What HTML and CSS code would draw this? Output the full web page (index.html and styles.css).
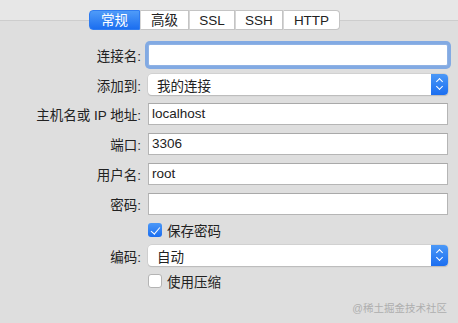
FILE: index.html
```html
<!DOCTYPE html>
<html lang="zh-CN">

<head>
    <meta charset="UTF-8">
    <title>新建连接</title>
    <link rel="stylesheet" href="styles.css">
</head>

<body>
    <!-- 탭 -->
    <div class="tabs">
        <span class="tab tab1 on">常规</span>
        <span class="tab tab2">高级</span>
        <span class="tab tab3">SSL</span>
        <span class="tab tab4">SSH</span>
        <span class="tab tab5">HTTP</span>
    </div>

    <!-- 폼 -->
    <div class="form">
        <label class="lb">连接名:</label>
        <div class="field focus"></div>

        <label class="lb">添加到:</label>
        <div class="sel"><span class="seltxt">我的连接</span><span class="step"></span></div>

        <label class="lb">主机名或 IP 地址:</label>
        <div class="field">localhost</div>

        <label class="lb">端口:</label>
        <div class="field">3306</div>

        <label class="lb">用户名:</label>
        <div class="field">root</div>

        <label class="lb">密码:</label>
        <div class="field"></div>

        <span></span>
        <div class="chk"><span class="box on"></span>保存密码</div>

        <label class="lb">编码:</label>
        <div class="sel"><span class="seltxt">自动</span><span class="step"></span></div>

        <span></span>
        <div class="chk"><span class="box"></span>使用压缩</div>
    </div>

    <div class="mark">@稀土掘金技术社区</div>
</body>

</html>
```

FILE: styles.css
```css
/* 공통 */
body {
    margin: 0;
    height: 323px;
    position: relative;
    font-family: "Liberation Sans", "Noto Sans CJK SC", sans-serif;
    font-size: 13.5px;
    color: #222;
    /* 위쪽 밝은 띠 + 가로선 + 본문 배경 */
    background: linear-gradient(#e7e7e7 0 20px, #cdcdcd 20px 21px, #dedede 21px);
}

/* 탭 버튼 묶음 */
.tabs {
    display: flex;
    margin-left: 89px;
    padding-top: 10px;
}

.tab {
    height: 20px;
    line-height: 19px;
    text-align: center;
    background: #fff;
    border: 1px solid #c4c4c4;
    border-left: 1px solid #d6d6d6;
    box-sizing: border-box;
    font-size: 13.5px;
}

.tab1 {
    width: 51px;
    border-radius: 4px 0 0 4px;
    border-left-color: #c4c4c4;
}

.tab2 { width: 49px; }
.tab3 { width: 46px; }
.tab4 { width: 48px; }

.tab5 {
    width: 57px;
    border-radius: 0 4px 4px 0;
}

.tab.on {
    color: #fff;
    background: linear-gradient(#4f9bf8, #1b6ef0);
    border-color: #2f7cf0;
}

/* 폼 그리드 */
.form {
    display: grid;
    grid-template-columns: 141px 300px;
    column-gap: 7px;
    row-gap: 8px;
    margin-top: 14px;
    align-items: center;
}

.lb {
    text-align: right;
}

.field {
    height: 22px;
    line-height: 20px;
    box-sizing: border-box;
    background: #fff;
    border: 1px solid #b5b5b5;
    border-top-color: #a9a9a9;
    padding-left: 3px;
}

.field.focus {
    border-color: #8fb2e4;
    box-shadow: 0 0 0 3px #82aae3;
    border-radius: 2px;
}

/* 셀렉트 */
.sel {
    height: 21px;
    box-sizing: border-box;
    background: #fff;
    border-radius: 4px;
    box-shadow: 0 0 0 0.5px #c4c4c4, 0 1px 1px rgba(0, 0, 0, 0.2);
    display: flex;
    align-items: center;
    position: relative;
}

.seltxt {
    flex: 1;
    padding-left: 9px;
}

.step {
    width: 17px;
    height: 21px;
    border-radius: 0 4px 4px 0;
    background: linear-gradient(#4b98f7, #1b6ef0);
    position: relative;
}

/* 위아래 화살표 */
.step::before,
.step::after {
    content: "";
    position: absolute;
    left: 6px;
    width: 4px;
    height: 4px;
    border: solid #fff;
    border-width: 1.5px 0 0 1.5px;
}

.step::before {
    top: 5px;
    transform: rotate(45deg);
}

.step::after {
    top: 10px;
    transform: rotate(225deg);
}

/* 체크박스 */
.chk {
    display: flex;
    align-items: center;
    height: 14px;
}

.box {
    width: 14px;
    height: 14px;
    box-sizing: border-box;
    border-radius: 3px;
    background: #fff;
    border: 1px solid #b4b4b4;
    margin-right: 5px;
    position: relative;
}

.box.on {
    border: none;
    background: linear-gradient(#4b98f7, #1b6ef0);
}

.box.on::after {
    content: "";
    position: absolute;
    left: 4.5px;
    top: 1.5px;
    width: 3.5px;
    height: 8px;
    border: solid #fff;
    border-width: 0 1.8px 1.8px 0;
    transform: rotate(40deg);
}

/* 워터마크 */
.mark {
    position: absolute;
    right: 11px;
    bottom: 8px;
    font-size: 10.5px;
    color: #aeaeae;
}
```
